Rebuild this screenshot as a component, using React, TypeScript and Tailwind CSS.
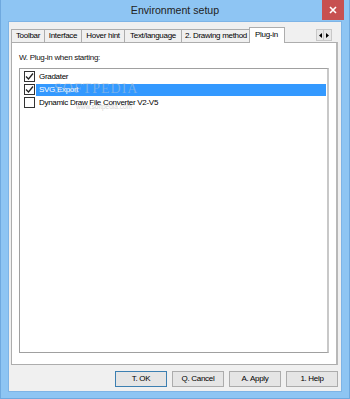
import React from 'react';

const tabs = [
  { label: 'Toolbar', w: 34 },
  { label: 'Interface', w: 38 },
  { label: 'Hover hint', w: 44 },
  { label: 'Text/language', w: 58 },
  { label: '2. Drawing method', w: 70 },
];

const plugins = [
  { name: 'Gradater', checked: true, selected: false },
  { name: 'SVG Export', checked: true, selected: true },
  { name: 'Dynamic Draw File Converter V2-V5', checked: false, selected: false },
];

const Check: React.FC<{ checked: boolean }> = ({ checked }) => (
  <div className="w-[11px] h-[11px] border border-[#333] bg-white flex items-center justify-center shrink-0">
    {checked && (
      <svg width="9" height="9" viewBox="0 0 9 9">
        <path d="M1 4.5 L3.5 7 L8 1.5" fill="none" stroke="#222" strokeWidth="1.3" />
      </svg>
    )}
  </div>
);

export default function App() {
  return (
    <div
      className="w-[350px] h-[399px] bg-[#8ec5f3] border-l border-r border-b border-[#6fa9df] flex flex-col text-[8px] tracking-[-0.3px] text-black"
      style={{ fontFamily: '"Liberation Sans", Arial, sans-serif' }}
    >
      {/* Title bar */}
      <div className="relative h-[21px] flex items-center justify-center">
        <span className="text-[10.6px] tracking-normal text-[#222] mt-[1px]">Environment setup</span>
        <div className="absolute right-[5px] top-0 w-[22px] h-[20px] bg-[#c75050] flex items-center justify-center">
          <svg width="8" height="8" viewBox="0 0 8 8">
            <path d="M1 1 L7 7 M7 1 L1 7" stroke="#fff" strokeWidth="1.6" />
          </svg>
        </div>
      </div>

      {/* Client area */}
      <div className="flex-1 mx-[7px] mb-[6px] bg-[#f0f0f0] border border-[#7eb4e6] flex flex-col pt-[5px] pl-[2px] pr-[3px]">
        {/* Tab strip */}
        <div className="flex items-end h-[15px]">
          {tabs.map((t) => (
            <div
              key={t.label}
              style={{ width: t.w }}
              className="h-[13px] bg-[#f0f0f0] border border-b-0 border-[#adadad] -ml-px first:ml-0 flex items-center justify-center leading-none whitespace-nowrap"
            >
              {t.label}
            </div>
          ))}
          <div className="w-[36px] h-[16px] bg-white border border-b-0 border-[#adadad] -ml-[2px] -mb-px relative z-10 flex items-start pl-[5px] pt-[3px] leading-none">
            Plug-in
          </div>
          <div className="ml-auto mr-[6px] mb-[1px] flex">
            <div className="w-[8px] h-[12px] bg-[#e8e8e8] border border-[#c8c8c8] flex items-center justify-center">
              <svg width="3" height="5" viewBox="0 0 3 5"><path d="M3 0 L0 2.5 L3 5 Z" fill="#000" /></svg>
            </div>
            <div className="w-[8px] h-[12px] bg-[#e8e8e8] border border-l-0 border-[#c8c8c8] flex items-center justify-center">
              <svg width="3" height="5" viewBox="0 0 3 5"><path d="M0 0 L3 2.5 L0 5 Z" fill="#000" /></svg>
            </div>
          </div>
        </div>

        {/* Tab page */}
        <div className="h-[323px] bg-white border border-[#adadad] border-r-2 border-r-[#b8b8b8] flex flex-col px-[7px] pt-[11px] pb-[11px]">
          <div className="leading-none mb-[6px] text-[#111]">W. Plug-in when starting:</div>
          <div className="relative flex-1 border border-[#a0a0a0] border-r-2 border-r-[#c8c8c8] pt-[1px] pl-[4px] pr-[1px]">
            {plugins.map((p) => (
              <div key={p.name} className="h-[13px] flex items-center">
                <Check checked={p.checked} />
                <div
                  className={
                    p.selected
                      ? 'flex-1 h-[12px] ml-[1px] pl-[3px] bg-[#3399ff] text-white flex items-center leading-none'
                      : 'flex-1 h-[12px] ml-[1px] pl-[3px] flex items-center leading-none'
                  }
                >
                  {p.name}
                </div>
              </div>
            ))}
            <div
              className="absolute left-[34px] top-[13px] text-[14px] tracking-[1px] text-[#b9c6d3]/50 leading-none pointer-events-none"
              style={{ fontFamily: '"Liberation Serif", serif' }}
            >
              SOFTPEDIA
            </div>
            <div className="absolute left-[56px] top-[35px] text-[6.5px] tracking-normal text-[#d4d4d4] leading-none pointer-events-none">
              www.softpedia.com
            </div>
          </div>
        </div>

        {/* Buttons */}
        <div className="flex justify-end gap-[5px] mt-[6px]">
          {['T. OK', 'Q. Cancel', 'A. Apply', '1. Help'].map((b, i) => (
            <div
              key={b}
              className={
                i === 0
                  ? 'w-[52px] h-[16px] bg-[#e5e5e5] border border-[#3c7fb1] flex items-center justify-center leading-none'
                  : 'w-[52px] h-[16px] bg-[#e5e5e5] border border-[#acacac] flex items-center justify-center leading-none'
              }
            >
              {b}
            </div>
          ))}
        </div>
      </div>
    </div>
  );
}
